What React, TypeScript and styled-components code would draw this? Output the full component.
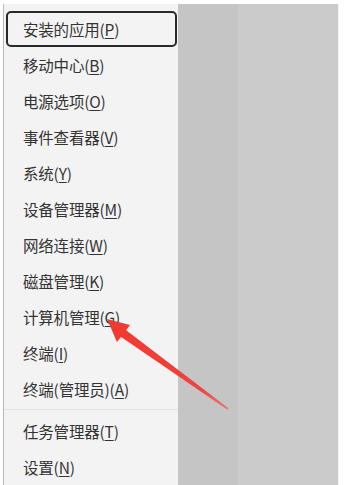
import styled, { createGlobalStyle } from 'styled-components';

const GlobalStyle = createGlobalStyle`
  html, body {
    margin: 0;
    padding: 0;
    background: #ffffff;
  }
  body {
    font-family: "Noto Sans CJK SC", "Noto Sans", sans-serif;
  }
`;

type Item = { label: string; key: string; focused?: boolean };

const groupA: Item[] = [
  { label: '安装的应用', key: 'P', focused: true },
  { label: '移动中心', key: 'B' },
  { label: '电源选项', key: 'O' },
  { label: '事件查看器', key: 'V' },
  { label: '系统', key: 'Y' },
  { label: '设备管理器', key: 'M' },
  { label: '网络连接', key: 'W' },
  { label: '磁盘管理', key: 'K' },
  { label: '计算机管理', key: 'G' },
  { label: '终端', key: 'I' },
  { label: '终端(管理员)', key: 'A' },
];

const groupB: Item[] = [
  { label: '任务管理器', key: 'T' },
  { label: '设置', key: 'N' },
];

const MenuItem = ({ item }: { item: Item }) => (
  <Row $focused={item.focused}>
    {item.label}(<Key>{item.key}</Key>)
  </Row>
);

const App = () => {
  return (
    <>
      <GlobalStyle />
      <Screen>
        <Menu>
          {groupA.map((it) => (
            <MenuItem key={it.label} item={it} />
          ))}
          <Separator />
          {groupB.map((it) => (
            <MenuItem key={it.label} item={it} />
          ))}
        </Menu>
        <Desktop />
        <Desktop $light />
        <Edge />
        {/* red pointer drawn over the screenshot */}
        <Arrow viewBox="0 0 359 485" width="359" height="485">
          <defs>
            <linearGradient id="shaft" x1="120" y1="332" x2="228" y2="409" gradientUnits="userSpaceOnUse">
              <stop offset="0" stopColor="#f03a32" />
              <stop offset="0.75" stopColor="#ec4540" />
              <stop offset="1" stopColor="#d8807f" />
            </linearGradient>
          </defs>
          <polygon points="124.5,329 119,335.5 227.4,409.8 228.6,408.2" fill="url(#shaft)" />
          <polygon points="107,319 130,325 117,342" fill="#f03a32" />
        </Arrow>
      </Screen>
    </>
  );
};

const Screen = styled.div`
  position: relative;
  display: flex;
  width: 359px;
  height: 485px;
  padding-top: 4px;
  box-sizing: border-box;
  overflow: hidden;
  background: #ffffff;
`;

const Menu = styled.div`
  margin-left: 3px;
  width: 175px;
  flex-shrink: 0;
  box-sizing: border-box;
  padding: 7px 1px 0 2px;
  background: #f3f3f3;
  border-left: 1px solid #b9b9b9;
  display: flex;
  flex-direction: column;
`;

const Row = styled.div<{ $focused?: boolean }>`
  height: 36px;
  flex-shrink: 0;
  box-sizing: border-box;
  display: flex;
  align-items: center;
  padding-left: ${(p) => (p.$focused ? '15px' : '17px')};
  font-size: 15.5px;
  color: #333333;
  letter-spacing: -0.2px;
  white-space: nowrap;
  border-radius: 5px;
  border: ${(p) => (p.$focused ? '2px solid #2a2a2a' : 'none')};
`;

const Key = styled.span`
  text-decoration: underline;
  text-underline-offset: 2px;
`;

const Separator = styled.div`
  height: 1px;
  margin: 2px -1px 3px -2px;
  background: #e4e4e4;
  flex-shrink: 0;
`;

const Desktop = styled.div<{ $light?: boolean }>`
  width: ${(p) => (p.$light ? '100px' : '60px')};
  flex-shrink: 0;
  background: ${(p) => (p.$light ? '#cbcbcb' : '#c5c5c5')};
`;

const Edge = styled.div`
  flex: 1;
  background: #ffffff;
  border-left: 1px solid #f4f4f4;
`;

const Arrow = styled.svg`
  position: absolute;
  left: 0;
  top: 0;
  pointer-events: none;
`;

export default App;
